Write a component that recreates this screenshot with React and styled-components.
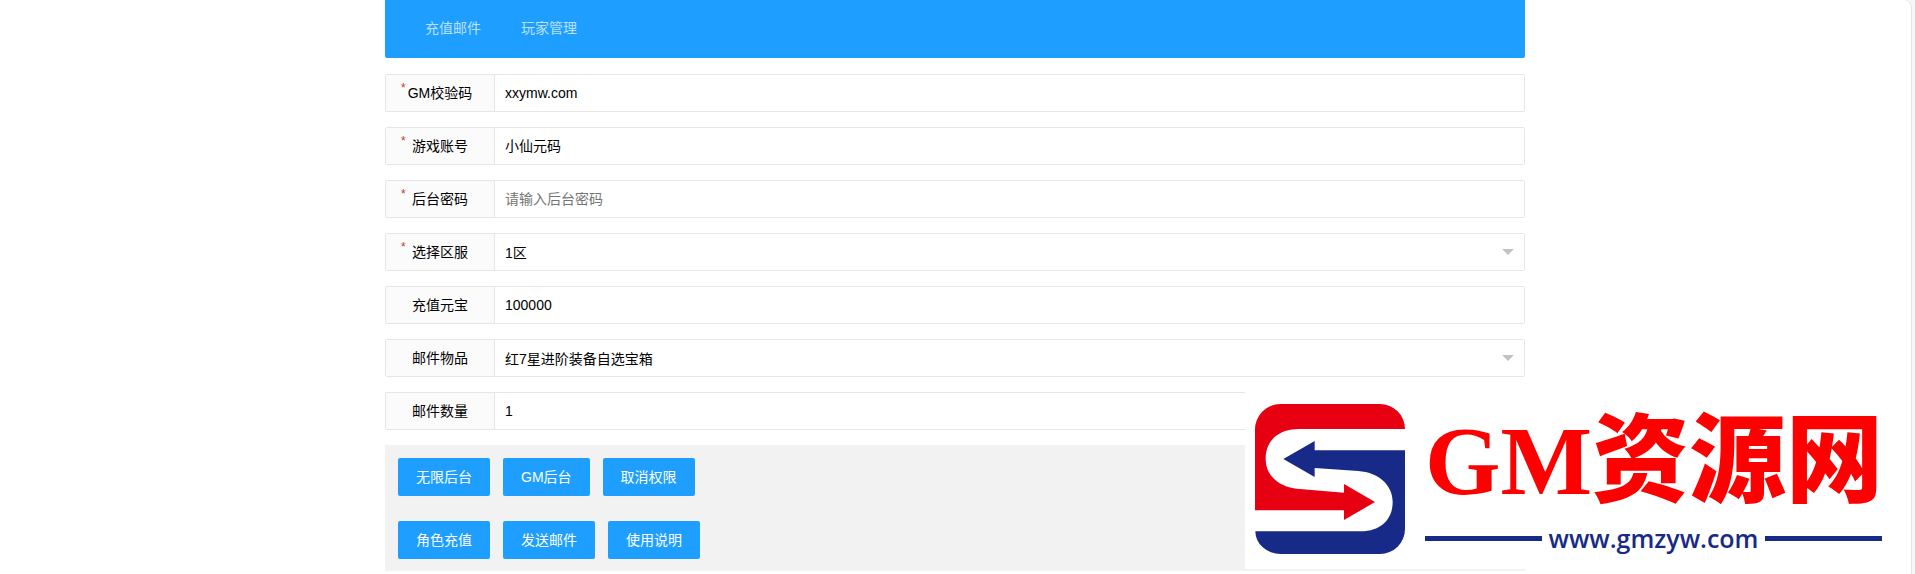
import { useState } from "react";
import styled, { createGlobalStyle } from "styled-components";

const servers = ["1区", "2区", "3区"];
const items = ["红7星进阶装备自选宝箱", "红8星进阶装备自选宝箱"];

const fields = [
  { name: "checkNum", label: "GM校验码", required: true },
  { name: "account", label: "游戏账号", required: true },
  {
    name: "password",
    label: "后台密码",
    required: true,
    placeholder: "请输入后台密码",
  },
  { name: "server", label: "选择区服", required: true, options: servers },
  { name: "gold", label: "充值元宝" },
  { name: "item", label: "邮件物品", options: items },
  { name: "amount", label: "邮件数量" },
];

const buttonRows = [
  ["无限后台", "GM后台", "取消权限"],
  ["角色充值", "发送邮件", "使用说明"],
];

export default function App() {
  const [values, setValues] = useState({
    checkNum: "xxymw.com",
    account: "小仙元码",
    password: "",
    server: servers[0],
    gold: "100000",
    item: items[0],
    amount: "1",
  });

  function handleChange(event) {
    setValues({ ...values, [event.target.name]: event.target.value });
  }

  return (
    <>
      <GlobalStyle />
      <Page>
        <Container>
          <Nav>
            <NavLink href="#mail">充值邮件</NavLink>
            <NavLink href="#players">玩家管理</NavLink>
          </Nav>

          <Form onSubmit={(event) => event.preventDefault()}>
            {fields.map(({ name, label, required, placeholder, options }) => (
              <FormItem key={name}>
                <Label htmlFor={name}>
                  {required && <Required>*</Required>}
                  {label}
                </Label>
                {options ? (
                  <SelectWrapper>
                    <Select
                      id={name}
                      name={name}
                      value={values[name]}
                      onChange={handleChange}
                    >
                      {options.map((option) => (
                        <option key={option}>{option}</option>
                      ))}
                    </Select>
                  </SelectWrapper>
                ) : (
                  <Input
                    id={name}
                    name={name}
                    type={name === "password" ? "password" : "text"}
                    placeholder={placeholder}
                    value={values[name]}
                    onChange={handleChange}
                  />
                )}
              </FormItem>
            ))}

            <Actions>
              {buttonRows.map((row) => (
                <ButtonRow key={row[0]}>
                  {row.map((text) => (
                    <Button key={text} type="button">
                      {text}
                    </Button>
                  ))}
                </ButtonRow>
              ))}
            </Actions>
          </Form>
        </Container>
      </Page>

      <Brand>
        <Logo />
        <BrandText>
          <BrandName>GM资源网</BrandName>
          <BrandUrl>www.gmzyw.com</BrandUrl>
        </BrandText>
      </Brand>
    </>
  );
}

function Logo() {
  return (
    <svg width="150" height="150" viewBox="75 72 450 450" aria-hidden="true">
      <path
        fill="#e60012"
        d="M75 148A76 76 0 0 1 151 72H450A75 75 0 0 1 525 147H207C145 147 107 182 107 237C107 288 148 323 210 327L342 338V312L435 366L342 420V391H75Z"
      />
      <path
        fill="#182a87"
        d="M525 211H254V183L160 237L254 291V264L385 273C444 277 488 314 488 366C488 420 450 454 392 454H76A76 68 0 0 0 152 522H450A75 75 0 0 0 525 447Z"
      />
    </svg>
  );
}

const GlobalStyle = createGlobalStyle`
  * {
    box-sizing: border-box;
  }

  body {
    margin: 0;
    background: #f7f7f7;
    color: #000;
    font: 14px/24px "Liberation Sans", "Noto Sans CJK SC", sans-serif;
  }

  input,
  select,
  button {
    font: inherit;
    color: inherit;
  }
`;

const Page = styled.main`
  min-height: 100vh;
  margin-right: 3px;
  padding-right: 1px;
  background: #fff;
  border-right: 1px solid #e4e4e4;
  border-radius: 2px 8px 0 0;
`;

const Container = styled.div`
  max-width: 1140px;
  margin: 0 auto;
`;

const Nav = styled.nav`
  display: flex;
  height: 58px;
  padding: 0 20px;
  background: #1e9fff;
  border-radius: 0 0 2px 2px;
`;

const NavLink = styled.a`
  padding: 0 20px;
  line-height: 56px;
  color: rgba(255, 255, 255, 0.7);
  text-decoration: none;

  &:hover {
    color: #fff;
  }
`;

const Form = styled.form`
  display: flex;
  flex-direction: column;
  gap: 15px;
  padding-top: 16px;
`;

const FormItem = styled.div`
  display: flex;
  height: 38px;
  border: 1px solid #e6e6e6;
  border-radius: 2px;
`;

const Label = styled.label`
  position: relative;
  width: 109px;
  line-height: 36px;
  text-align: center;
  background: #fbfbfb;
  border-right: 1px solid #e6e6e6;
`;

const Required = styled.span`
  position: absolute;
  top: 4px;
  left: 15px;
  font-size: 12px;
  line-height: 18px;
  color: #c33;
`;

const Input = styled.input`
  flex: 1;
  min-width: 0;
  padding: 0 10px;
  background: #fff;
  border: none;
  outline: none;

  &::placeholder {
    color: #757575;
  }
`;

const SelectWrapper = styled.div`
  position: relative;
  display: flex;
  flex: 1;

  &::after {
    content: "";
    position: absolute;
    top: 15px;
    right: 10px;
    border: 6px solid transparent;
    border-top-color: #c2c2c2;
    pointer-events: none;
  }
`;

const Select = styled.select`
  appearance: none;
  flex: 1;
  padding: 2px 10px 0;
  background: #fff;
  border: none;
  outline: none;
`;

const Actions = styled.div`
  display: flex;
  flex-direction: column;
  gap: 25px;
  padding: 13px 13px 12px;
  background: #f2f2f2;
`;

const ButtonRow = styled.div`
  display: flex;
  gap: 13px;
`;

const Button = styled.button`
  height: 38px;
  padding: 0 18px;
  color: #fff;
  background: #1e9fff;
  border: none;
  border-radius: 2px;
  cursor: pointer;

  &:hover {
    opacity: 0.8;
  }
`;

const Brand = styled.aside`
  position: fixed;
  right: 23px;
  bottom: 5px;
  display: flex;
  gap: 20px;
  padding: 14px 10px 15px;
  background: #fff;
`;

const BrandText = styled.div`
  display: flex;
  flex-direction: column;
  gap: 2px;
  width: 457px;
`;

const BrandName = styled.div`
  font: 900 97px/116px "Liberation Serif", "Noto Sans CJK SC", serif;
  text-align: center;
  white-space: nowrap;
  color: #f00;
`;

const BrandUrl = styled.div`
  display: flex;
  align-items: center;
  gap: 7px;
  font: 600 25px/32px "Open Sans", sans-serif;
  color: #182a87;

  &::before,
  &::after {
    content: "";
    flex: 1;
    height: 5px;
    background: #182a87;
  }
`;
